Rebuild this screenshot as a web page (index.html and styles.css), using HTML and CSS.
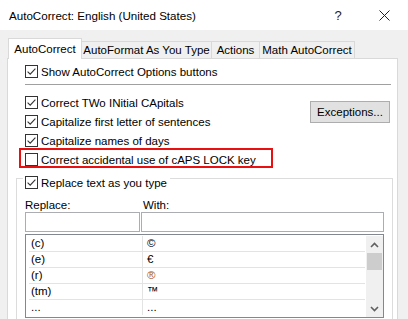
FILE: index.html
```html
<!DOCTYPE html>
<html lang="en">
  <head>
    <meta charset="UTF-8" />
    <title>AutoCorrect</title>
    <link rel="stylesheet" href="styles.css">
  </head>
  <body>
    <div class="window">
      <div class="titlebar">
        <span class="title">AutoCorrect: English (United States)</span>
        <span class="caption-btn help">?</span>
        <span class="caption-btn close">
          <svg width="11" height="11" viewBox="0 0 11 11">
            <path d="M0.5 0.5 L10.5 10.5 M10.5 0.5 L0.5 10.5" stroke="#222" stroke-width="1" fill="none" />
          </svg>
        </span>
      </div>

      <div class="tabs">
        <div class="tab active">AutoCorrect</div>
        <div class="tab tab-format">AutoFormat As You Type</div>
        <div class="tab tab-actions">Actions</div>
        <div class="tab tab-math">Math AutoCorrect</div>
      </div>

      <div class="panel">
        <label class="check-row first">
          <span class="box checked"></span>
          Show AutoCorrect Options buttons
        </label>
        <div class="separator"></div>

        <div class="options">
          <div class="option-list">
            <label class="check-row"><span class="box checked"></span>Correct TWo INitial CApitals</label>
            <label class="check-row"><span class="box checked"></span>Capitalize first letter of sentences</label>
            <label class="check-row"><span class="box checked"></span>Capitalize names of days</label>
            <label class="check-row highlighted">
              <span class="box"></span>Correct accidental use of cAPS LOCK key
              <span class="red-frame"></span>
            </label>
          </div>
          <button class="btn">Exceptions...</button>
        </div>

        <div class="group">
          <label class="check-row legend"><span class="box checked"></span>Replace text as you type</label>

          <div class="field-labels">
            <span class="col-replace">Replace:</span>
            <span>With:</span>
          </div>
          <div class="fields">
            <div class="input replace-input"></div>
            <div class="input with-input"></div>
          </div>

          <div class="list">
            <div class="rows">
              <div class="row"><span class="cell-key">(c)</span><span class="cell-val">©</span></div>
              <div class="row"><span class="cell-key">(e)</span><span class="cell-val">€</span></div>
              <div class="row"><span class="cell-key">(r)</span><span class="cell-val reg">®</span></div>
              <div class="row"><span class="cell-key">(tm)</span><span class="cell-val">™</span></div>
              <div class="row"><span class="cell-key">...</span><span class="cell-val">...</span></div>
            </div>
            <div class="scrollbar">
              <span class="arrow">
                <svg width="9" height="6" viewBox="0 0 9 6"><path d="M1 5 L4.5 1.5 L8 5" stroke="#606060" stroke-width="1.6" fill="none" /></svg>
              </span>
              <span class="thumb"></span>
              <span class="spacer"></span>
              <span class="arrow">
                <svg width="9" height="6" viewBox="0 0 9 6"><path d="M1 1 L4.5 4.5 L8 1" stroke="#606060" stroke-width="1.6" fill="none" /></svg>
              </span>
            </div>
          </div>
        </div>
      </div>
    </div>
  </body>
</html>
```

FILE: styles.css
```css
body {
  margin: 0;
  font-family: "Liberation Sans", Arial, sans-serif;
  font-size: 11.5px;
  color: #000;
  background-color: #f0f0f0;
  overflow: hidden;
}

.window {
  width: 408px;
  height: 319px;
  overflow: hidden;
  background-color: #f0f0f0;
}

.titlebar {
  height: 30px;
  background-color: #fff;
  display: flex;
  align-items: center;
  padding-left: 9px;
}

.title {
  font-size: 11.6px;
  color: #000;
}

.caption-btn {
  width: 46px;
  height: 30px;
  display: flex;
  align-items: center;
  justify-content: center;
  color: #222;
}

.help {
  margin-left: auto;
  font-size: 13px;
}

.close {
  margin-right: 1px;
}

.tabs {
  display: flex;
  align-items: flex-end;
  padding-left: 8px;
  margin-top: 8px;
  height: 20px;
}

.tab {
  height: 16px;
  line-height: 16px;
  text-align: center;
  border: 1px solid #d9d9d9;
  border-bottom: none;
  border-left: none;
  background-color: #f0f0f0;
}

.tab.active {
  width: 72px;
  height: 20px;
  line-height: 20px;
  border-left: 1px solid #d9d9d9;
  background-color: #fff;
  margin-bottom: -1px;
  position: relative;
  z-index: 1;
}

.tab-format {
  width: 129px;
}

.tab-actions {
  width: 47px;
}

.tab-math {
  width: 94px;
}

.panel {
  margin-left: 7px;
  width: 389px;
  height: 300px;
  border: 1px solid #d9d9d9;
  background-color: #fff;
}

.check-row {
  display: flex;
  align-items: center;
  height: 19px;
  white-space: nowrap;
}

.check-row.first {
  margin: 3px 0 0 17px;
}

.box {
  width: 11px;
  height: 11px;
  border: 1px solid #333;
  background-color: #fff;
  margin-right: 3px;
  flex-shrink: 0;
  position: relative;
}

.box.checked::after {
  content: "";
  position: absolute;
  left: 1px;
  top: 1px;
  width: 9px;
  height: 9px;
  background-image: url("data:image/svg+xml;utf8,<svg xmlns='http://www.w3.org/2000/svg' width='9' height='9' viewBox='0 0 9 9'><path d='M0.6 4.6 L3.2 7.2 L8.4 1.6' stroke='%23333' stroke-width='1.1' fill='none'/></svg>");
}

.separator {
  height: 1px;
  background-color: #a0a0a0;
  margin: 3px 6px 0 17px;
}

.options {
  display: flex;
  justify-content: space-between;
  margin-top: 8px;
  padding: 0 7px 0 17px;
}

.highlighted {
  position: relative;
}

.red-frame {
  position: absolute;
  left: -6px;
  top: -2px;
  width: 250px;
  height: 16px;
  border: 2px solid #e81010;
}

.btn {
  width: 80px;
  height: 22px;
  margin-top: 8px;
  border: 1px solid #adadad;
  background-color: #e1e1e1;
  font-family: inherit;
  font-size: 11.5px;
  color: #000;
  padding: 0;
}

.group {
  margin: 9px 4px 0 8px;
  height: 160px;
  border: 1px solid #dcdcdc;
  border-bottom: none;
  padding: 0 8px 0 8px;
}

.check-row.legend {
  display: inline-flex;
  margin-top: -10px;
  margin-left: -2px;
  padding: 0 3px 0 2px;
  background-color: #fff;
}

.field-labels {
  display: flex;
  height: 15px;
  margin-top: 5px;
  align-items: center;
}

.col-replace {
  width: 118px;
}

.fields {
  display: flex;
  gap: 1px;
}

.input {
  height: 18px;
  border: 1px solid #abadb3;
  background-color: #fff;
}

.replace-input {
  width: 113px;
}

.with-input {
  width: 241px;
}

.list {
  display: flex;
  margin-top: 2px;
  width: 356px;
  height: 81px;
  border: 1px solid #828790;
  padding: 1px 0 0 1px;
}

.rows {
  flex: 1;
  padding: 0 1px 0 2px;
}

.row {
  display: flex;
  height: 15px;
  line-height: 15px;
  border-bottom: 1px solid #e3e3e3;
}

.row:last-child {
  border-bottom: none;
}

.cell-key {
  width: 111px;
  padding-left: 2px;
  border-right: 1px solid #e3e3e3;
}

.cell-val {
  padding-left: 4px;
}

.reg {
  color: #a8570a;
}

.scrollbar {
  width: 17px;
  display: flex;
  flex-direction: column;
  align-items: center;
  background-color: #f0f0f0;
}

.arrow {
  height: 17px;
  display: flex;
  align-items: center;
  justify-content: center;
}

.thumb {
  width: 15px;
  height: 17px;
  background-color: #cdcdcd;
}

.spacer {
  flex: 1;
}
```
